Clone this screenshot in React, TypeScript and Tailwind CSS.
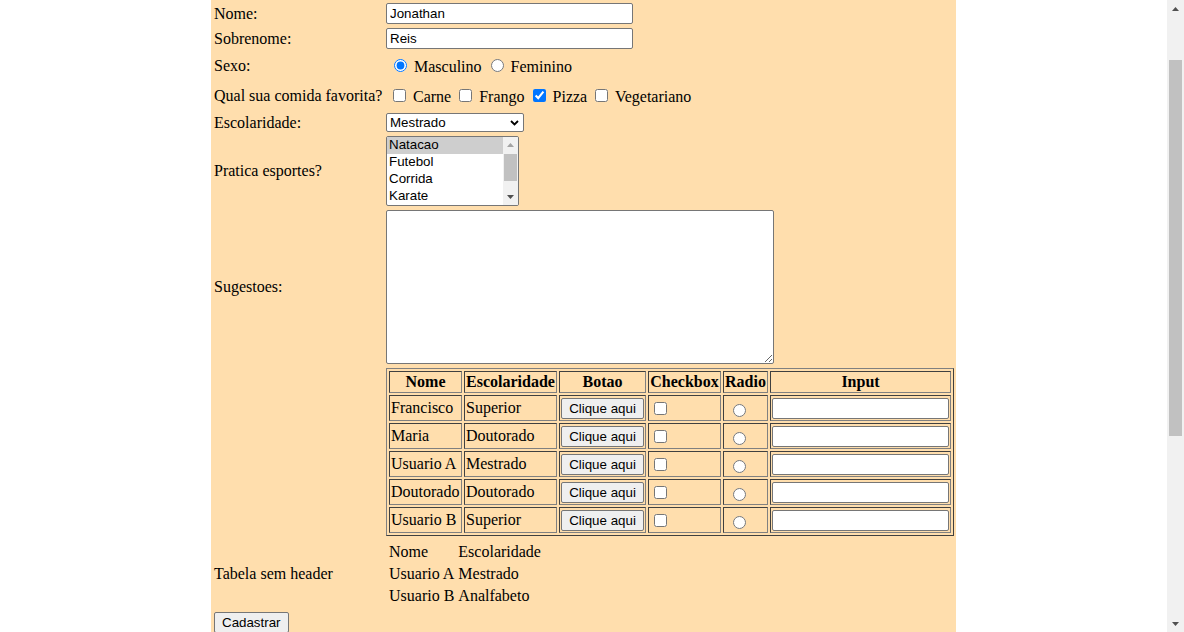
import React from "react";

const serif = "font-['Liberation_Serif','Times_New_Roman',serif] text-[16px] leading-[18px] text-black";
const sans = "font-['Liberation_Sans',Arial,sans-serif] text-[13.33px] text-black";
const textInput =
  "h-[21px] border border-[#767676] rounded-[2px] bg-white px-[3px] outline-none font-['Liberation_Sans',Arial,sans-serif] text-[13.33px] text-black";
const button =
  "h-[21px] px-[7px] border border-[#767676] rounded-[2px] bg-[#efefef] leading-[15px] font-['Liberation_Sans',Arial,sans-serif] text-[13.33px] text-black";
const cellBorder =
  "border border-t-[#404040] border-l-[#404040] border-r-[#808080] border-b-[#808080]";

const people = [
  ["Francisco", "Superior"],
  ["Maria", "Doutorado"],
  ["Usuario A", "Mestrado"],
  ["Doutorado", "Doutorado"],
  ["Usuario B", "Superior"],
];

const headers = [
  { label: "Nome", w: "w-[73px]" },
  { label: "Escolaridade", w: "w-[93px]" },
  { label: "Botao", w: "w-[87px]" },
  { label: "Checkbox", w: "w-[73px]" },
  { label: "Radio", w: "w-[45px]" },
  { label: "Input", w: "w-[181px]" },
];

function Row({ label, h, children }: { label?: string; h: string; children: React.ReactNode }) {
  return (
    <div className={`flex items-center shrink-0 ${h}`}>
      <div className={`w-[172px] shrink-0 whitespace-nowrap ${serif}`}>{label}</div>
      <div className="flex items-center">{children}</div>
    </div>
  );
}

function Arrow({ up, color }: { up?: boolean; color: string }) {
  return (
    <svg width="7" height="4" viewBox="0 0 7 4">
      <path d={up ? "M0 4 L3.5 0 L7 4 Z" : "M0 0 L3.5 4 L7 0 Z"} fill={color} />
    </svg>
  );
}

function ListBox() {
  const items = ["Natacao", "Futebol", "Corrida", "Karate"];
  return (
    <div className="flex h-[70px] w-[133px] border border-[#767676] rounded-[2px] bg-white overflow-hidden">
      <div className="flex-1 flex flex-col">
        {items.map((item, i) => (
          <div
            key={item}
            className={`h-[17px] px-[2px] pb-[2px] leading-[15px] ${sans} ${i === 0 ? "bg-[#cecece]" : ""}`}
          >
            {item}
          </div>
        ))}
      </div>
      <div className="w-[15px] bg-[#f1f1f1] flex flex-col items-center">
        <div className="h-[16px] flex items-center justify-center">
          <Arrow up color="#a3a3a3" />
        </div>
        <div className="mt-[1px] w-[13px] h-[27px] bg-[#c1c1c1]" />
        <div className="flex-1" />
        <div className="h-[16px] flex items-center justify-center">
          <Arrow color="#505050" />
        </div>
      </div>
    </div>
  );
}

export default function App() {
  return (
    <div className="flex h-[632px] w-full overflow-hidden bg-white">
      <div className="flex-1 min-w-0 h-full overflow-hidden">
        <form className="mx-auto w-[745px] h-full overflow-hidden bg-[#ffdead] pl-[3px] pt-[3px] flex flex-col gap-[4px]">
          <Row label="Nome:" h="h-[21px]">
            <input className={`${textInput} w-[247px]`} defaultValue="Jonathan" />
          </Row>
          <Row label="Sobrenome:" h="h-[21px]">
            <input className={`${textInput} w-[247px]`} defaultValue="Reis" />
          </Row>
          <Row label="Sexo:" h="h-[25px]">
            <div className={`pl-[3px] ${serif}`}>
              <input type="radio" name="sexo" defaultChecked className="m-[3px_3px_0px_5px]" />{" "}
              Masculino{" "}
              <input type="radio" name="sexo" className="m-[3px_3px_0px_5px]" /> Feminino
            </div>
          </Row>
          <Row label="Qual sua comida favorita?" h="h-[27px]">
            <div className={`pl-[3px] ${serif}`}>
              <input type="checkbox" className="m-[3px_3px_3px_4px]" /> Carne{" "}
              <input type="checkbox" className="m-[3px_3px_3px_4px]" /> Frango{" "}
              <input type="checkbox" defaultChecked className="m-[3px_3px_3px_4px]" /> Pizza{" "}
              <input type="checkbox" className="m-[3px_3px_3px_4px]" /> Vegetariano
            </div>
          </Row>
          <Row label="Escolaridade:" h="h-[19px]">
            <div className="flex items-center w-[138px] h-[19px] border border-[#767676] rounded-[2px] bg-white">
              <select
                defaultValue="Mestrado"
                className={`appearance-none flex-1 min-w-0 pl-[3px] bg-transparent outline-none leading-[15px] ${sans}`}
              >
                <option>Superior</option>
                <option>Mestrado</option>
                <option>Doutorado</option>
              </select>
              <svg width="9" height="6" viewBox="0 0 9 6" className="mr-[4px] shrink-0">
                <path d="M1 1 L4.5 4.5 L8 1" fill="none" stroke="#000" strokeWidth="1.8" />
              </svg>
            </div>
          </Row>
          <Row label="Pratica esportes?" h="h-[70px]">
            <ListBox />
          </Row>
          <Row label="Sugestoes:" h="h-[154px]">
            <textarea className="block w-[388px] h-[154px] border border-[#767676] rounded-[2px] bg-white outline-none" />
          </Row>
          <Row h="h-[168px]">
            <table
              className={`table-fixed border-separate border-spacing-[2px] border border-t-[#808080] border-l-[#808080] border-r-[#404040] border-b-[#404040] w-[568px] ${serif}`}
            >
              <thead>
                <tr>
                  {headers.map((h) => (
                    <th
                      key={h.label}
                      className={`${cellBorder} ${h.w} h-[22px] p-[1px] font-bold text-center whitespace-nowrap`}
                    >
                      {h.label}
                    </th>
                  ))}
                </tr>
              </thead>
              <tbody>
                {people.map(([name, level], i) => (
                  <tr key={i}>
                    <td className={`${cellBorder} h-[26px] p-[1px] whitespace-nowrap`}>{name}</td>
                    <td className={`${cellBorder} h-[26px] p-[1px] whitespace-nowrap`}>{level}</td>
                    <td className={`${cellBorder} h-[26px] p-[1px]`}>
                      <button type="button" className={`${button} block w-[83px]`}>
                        Clique aqui
                      </button>
                    </td>
                    <td className={`${cellBorder} h-[26px] p-[1px]`}>
                      <input type="checkbox" className="m-[3px_3px_3px_4px] align-middle" />
                    </td>
                    <td className={`${cellBorder} h-[26px] p-[1px]`}>
                      <input type="radio" name={`r${i}`} className="m-[3px_3px_0px_8px] align-middle" />
                    </td>
                    <td className={`${cellBorder} h-[26px] p-[1px]`}>
                      <input className={`${textInput} block w-[177px]`} />
                    </td>
                  </tr>
                ))}
              </tbody>
            </table>
          </Row>
          <Row label="Tabela sem header" h="h-[68px]">
            <table className={`border-separate border-spacing-[2px] ${serif}`}>
              <tbody>
                {[
                  ["Nome", "Escolaridade"],
                  ["Usuario A", "Mestrado"],
                  ["Usuario B", "Analfabeto"],
                ].map(([a, b]) => (
                  <tr key={a}>
                    <td className="p-[1px] whitespace-nowrap">{a}</td>
                    <td className="p-[1px] whitespace-nowrap">{b}</td>
                  </tr>
                ))}
              </tbody>
            </table>
          </Row>
          <div className="shrink-0 flex">
            <button type="button" className={`${button} block`}>
              Cadastrar
            </button>
          </div>
        </form>
      </div>
      <div className="w-[17px] h-full shrink-0 bg-[#f1f1f1] flex flex-col items-center">
        <div className="h-[17px] flex items-center justify-center">
          <Arrow up color="#505050" />
        </div>
        <div className="mt-[43px] w-[13px] h-[376px] bg-[#c1c1c1]" />
        <div className="flex-1" />
        <div className="h-[17px] flex items-center justify-center">
          <Arrow color="#505050" />
        </div>
      </div>
    </div>
  );
}
